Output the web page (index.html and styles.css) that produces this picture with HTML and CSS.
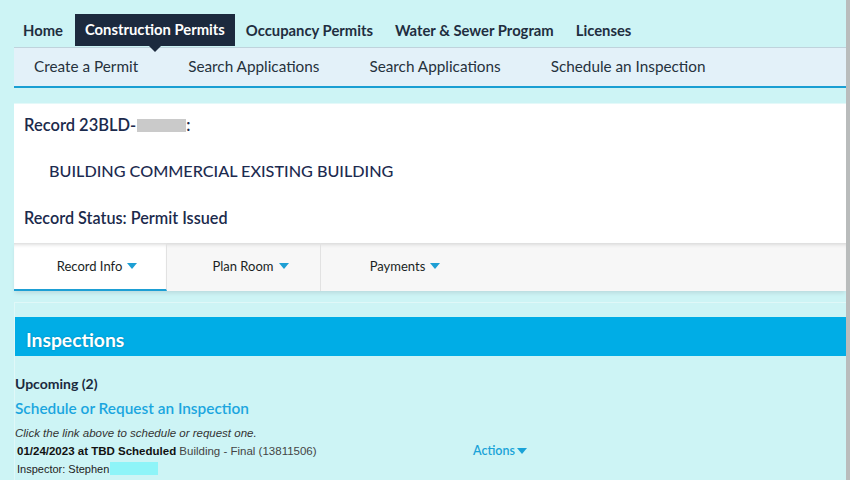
FILE: index.html
```html
<!DOCTYPE html>
<html>
<head>
<meta charset="utf-8">
<link rel="stylesheet" href="styles.css">
</head>
<body>
<div class="page">
  <nav class="topnav">
    <a class="top-item first">Home</a>
    <a class="top-item active">Construction Permits</a>
    <a class="top-item">Occupancy Permits</a>
    <a class="top-item">Water &amp; Sewer Program</a>
    <a class="top-item">Licenses</a>
  </nav>
  <nav class="subnav">
    <a class="sub-item">Create a Permit</a>
    <a class="sub-item">Search Applications</a>
    <a class="sub-item">Search Applications</a>
    <a class="sub-item">Schedule an Inspection</a>
  </nav>

  <section class="record-card">
    <div class="record-id">Record 23BLD-<span class="redact-gray"></span>:</div>
    <div class="record-type">BUILDING COMMERCIAL EXISTING BUILDING</div>
    <div class="record-status">Record Status: Permit Issued</div>
  </section>

  <div class="tabs">
    <a class="tab active">Record Info <span class="caret"></span></a>
    <a class="tab">Plan Room <span class="caret"></span></a>
    <a class="tab last">Payments <span class="caret"></span></a>
  </div>

  <section class="panel">
    <h2 class="panel-head">Inspections</h2>
    <div class="upcoming">Upcoming (2)</div>
    <a class="schedule-link">Schedule or Request an Inspection</a>
    <div class="hint">Click the link above to schedule or request one.</div>
    <div class="insp-row">
      <div class="insp-main"><b>01/24/2023 at TBD Scheduled</b> Building - Final (13811506)</div>
      <a class="actions">Actions<span class="caret small"></span></a>
    </div>
    <div class="inspector">Inspector: Stephen <span class="redact-cyan"></span></div>
  </section>
</div>
</body>
</html>
```

FILE: styles.css
```css
html, body {
  margin: 0;
  padding: 0;
  height: 100%;
  overflow: hidden;
}
body {
  background: #cdf4f5;
  font-family: Lato, "Open Sans", sans-serif;
  color: #1d2d44;
}
.page {
  box-sizing: border-box;
  height: 480px;
  overflow: hidden;
  padding: 14px 0 0 14px;
  border-right: 4px solid #b9bcbc;
}
a { text-decoration: none; cursor: pointer; }

/* top nav */
.topnav {
  display: flex;
  height: 33px;
  align-items: stretch;
}
.top-item {
  display: flex;
  align-items: center;
  padding: 0 11px 2px;
  font-size: 14.8px;
  font-weight: 700;
  color: #1f2e40;
  position: relative;
}
.top-item.first { padding-left: 9px; padding-right: 12px; }
.top-item.active {
  background: #1c2a3e;
  color: #ffffff;
  padding: 0 10px 2px;
  margin-bottom: 1px;
}
.top-item.active::after {
  content: "";
  position: absolute;
  left: 50%;
  bottom: -6px;
  margin-left: -6px;
  border-left: 6px solid transparent;
  border-right: 6px solid transparent;
  border-top: 6px solid #1c2a3e;
  z-index: 2;
}

/* sub nav */
.subnav {
  box-sizing: border-box;
  display: flex;
  gap: 50px;
  height: 41px;
  align-items: center;
  padding: 0 0 3px 20px;
  background: #e3f1f9;
  border-top: 1px solid #bfd3dc;
  border-bottom: 2px solid #1a9fd3;
}
.sub-item {
  font-size: 15.3px;
  color: #26323d;
}

/* record card */
.record-card {
  margin-top: 15px;
  background: #ffffff;
  height: 140px;
  box-sizing: border-box;
  padding: 10px 0 0 10px;
  border-top: 1px solid #e4f9f9;
  color: #1b2a4c;
}
.record-id {
  font-size: 16.5px;
  font-weight: 600;
  height: 22px;
  display: flex;
  align-items: center;
}
.redact-gray {
  display: inline-block;
  width: 49px;
  height: 13px;
  background: #cacaca;
  margin-left: 1px;
}
.record-type {
  font-size: 16.2px;
  font-weight: 500;
  margin-top: 24px;
  padding-left: 25px;
  height: 22px;
  line-height: 22px;
  color: #1c2b50;
}
.record-status {
  font-size: 16.2px;
  font-weight: 600;
  margin-top: 25px;
  height: 22px;
  line-height: 22px;
}

/* tabs */
.tabs {
  display: flex;
  height: 48px;
  background: #f7f7f7;
  box-shadow: inset 0 4px 4px -3px #cfcfcf, 0 3px 4px -1px #b9dadd;
}
.tab {
  width: 154px;
  box-sizing: border-box;
  display: flex;
  align-items: center;
  justify-content: center;
  padding: 0 0 2px 14px;
  font-size: 13px;
  color: #1a1f24;
  border-right: 1px solid #e2e2e2;
}
.tab.active {
  width: 153px;
  background: #ffffff;
  border-bottom: 2px solid #1d9fd4;
  padding-bottom: 0;
  box-shadow: inset 0 4px 4px -3px #cfcfcf;
}
.tab.last { border-right: none; }
.caret {
  display: inline-block;
  width: 0; height: 0;
  margin-left: 5px;
  border-left: 5px solid transparent;
  border-right: 5px solid transparent;
  border-top: 6px solid #1d9fd4;
}
.caret.small {
  margin-left: 2px;
  border-top-color: #1aa3d8;
}

/* panel */
.panel {
  box-sizing: border-box;
  margin-top: 11px;
  border-left: 1px solid #e0f8f8;
  border-top: 1px solid #e0f8f8;
  padding-top: 14px;
  height: 180px;
}
.panel-head {
  margin: 0;
  box-sizing: border-box;
  height: 39px;
  background: #00ade6;
  color: #ffffff;
  font-size: 19.3px;
  font-weight: 700;
  display: flex;
  align-items: center;
  padding: 5px 0 0 11px;
  text-shadow: 0 0 2px rgba(0,0,0,0.25);
}
.upcoming {
  margin-top: 19px;
  font-size: 14px;
  font-weight: 700;
  color: #1b2a3e;
  height: 18px;
  line-height: 18px;
}
.schedule-link {
  display: block;
  margin-top: 5px;
  font-size: 15.4px;
  font-weight: 600;
  color: #1ba6df;
  height: 20px;
  line-height: 20px;
}
.hint {
  margin-top: 9px;
  font-family: "Liberation Sans", Arial, sans-serif;
  font-style: italic;
  font-size: 11.5px;
  color: #333;
  height: 13px;
  line-height: 13px;
}
.insp-row {
  display: flex;
  align-items: center;
  padding-left: 2px;
  margin-top: 2px;
  height: 17px;
}
.insp-main {
  width: 456px;
  font-family: "Liberation Sans", Arial, sans-serif;
  font-size: 11.5px;
  color: #444;
}
.insp-main b { color: #111; }
.actions {
  font-size: 12.5px;
  font-weight: 600;
  color: #1aa3d8;
  display: flex;
  align-items: center;
}
.inspector {
  padding-left: 2px;
  margin-top: 2px;
  font-family: "Liberation Sans", Arial, sans-serif;
  font-size: 11px;
  color: #222;
  display: flex;
  align-items: center;
  height: 15px;
}
.redact-cyan {
  display: inline-block;
  width: 48px;
  height: 13px;
  background: #8ef4f8;
  margin-left: 1px;
}
```
